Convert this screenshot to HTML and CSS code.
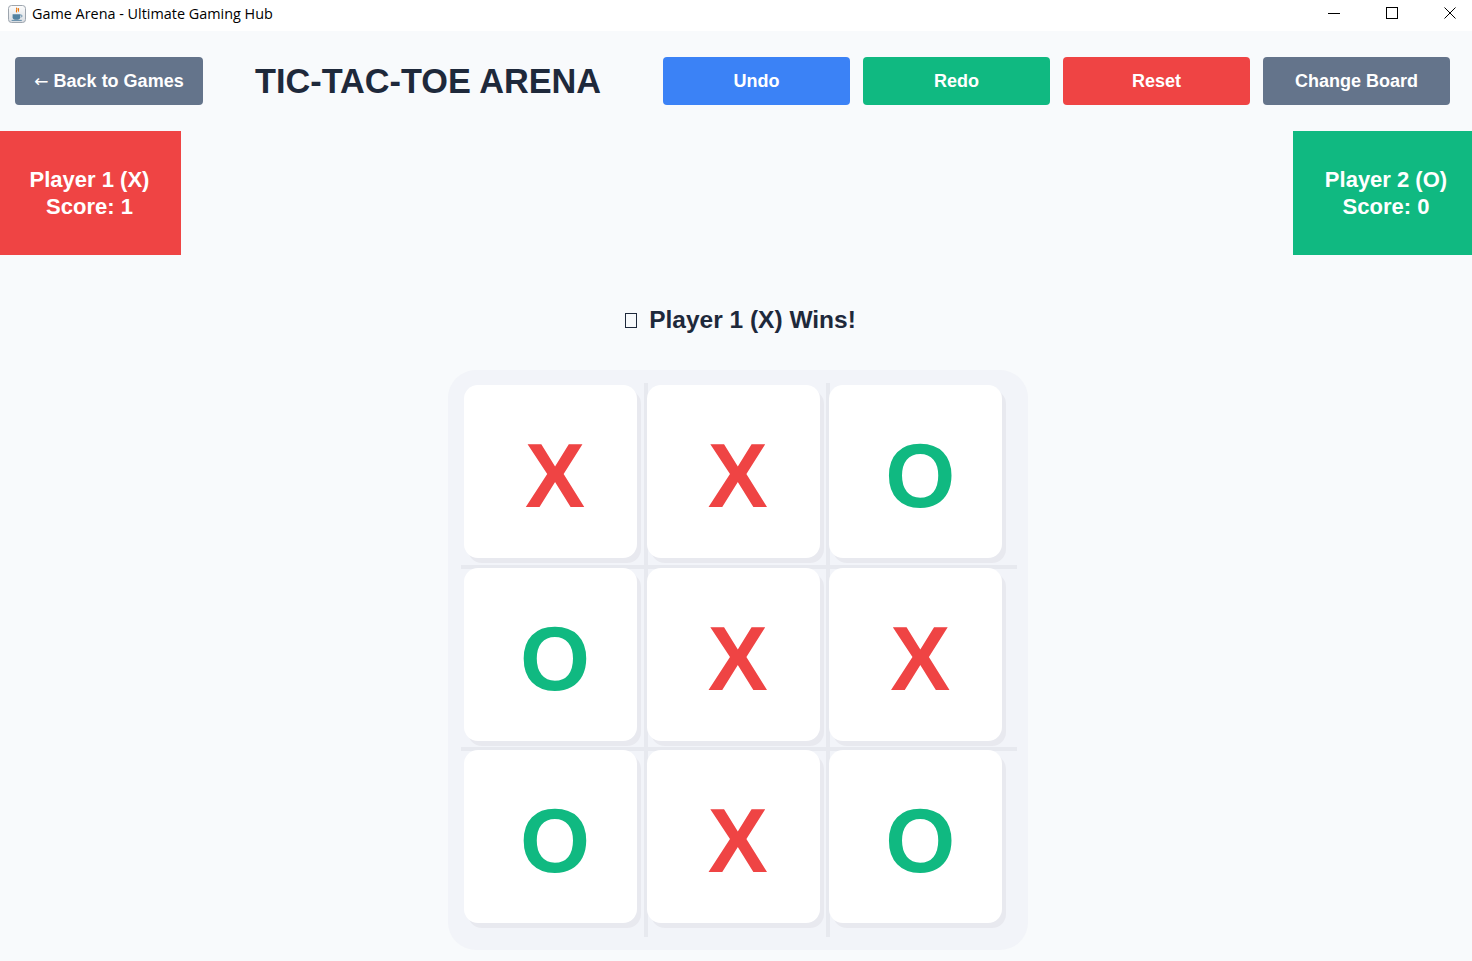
FILE: index.html
```html
<!DOCTYPE html>
<html lang="en">
<head>
<meta charset="utf-8">
<title>Game Arena - Ultimate Gaming Hub</title>
<link rel="stylesheet" href="styles.css">
</head>
<body>
<div class="window">
  <div class="titlebar">
    <div class="tb-left">
      <svg class="app-icon" viewBox="0 0 18 18">
        <defs>
          <linearGradient id="ig" x1="0" y1="0" x2="0" y2="1">
            <stop offset="0" stop-color="#fdfdfd"/>
            <stop offset="1" stop-color="#d9dde2"/>
          </linearGradient>
        </defs>
        <rect x="0.5" y="0.5" width="17" height="17" rx="3" fill="url(#ig)" stroke="#9da5ae"/>
        <path d="M8.5 3.2c1.6 1.2-1.2 2.2 0.2 3.8M10.4 3.6c1 0.9-0.8 1.6 0.1 2.6" fill="none" stroke="#e76f00" stroke-width="1.1" stroke-linecap="round"/>
        <path d="M4.6 9.2h7.6v3.2c0 1.6-1.5 2.4-3.8 2.4s-3.8-0.8-3.8-2.4z" fill="#5382a1"/>
        <path d="M12.2 10h0.9c1.2 0 1.2 2-0.3 2.2" fill="none" stroke="#5382a1" stroke-width="0.9"/>
        <path d="M3.6 15.4h10.2" stroke="#5382a1" stroke-width="0.9"/>
      </svg>
      <span class="tb-title">Game Arena - Ultimate Gaming Hub</span>
    </div>
    <div class="tb-controls">
      <span class="ctl"><svg viewBox="0 0 12 12"><path d="M0 6.5h12" stroke="#000" stroke-width="1"/></svg></span>
      <span class="ctl"><svg viewBox="0 0 12 12"><rect x="0.5" y="0.5" width="11" height="11" fill="none" stroke="#000" stroke-width="1"/></svg></span>
      <span class="ctl"><svg viewBox="0 0 12 12"><path d="M0.5 0.5l11 11M11.5 0.5l-11 11" stroke="#000" stroke-width="1"/></svg></span>
    </div>
  </div>

  <main class="app">
    <header class="topbar">
      <div class="topbar-left">
        <button class="btn btn-back"><span class="arrow">&larr;</span> Back to Games</button>
        <h1 class="title">TIC-TAC-TOE ARENA</h1>
      </div>
      <div class="actions">
        <button class="btn btn-blue">Undo</button>
        <button class="btn btn-green">Redo</button>
        <button class="btn btn-red">Reset</button>
        <button class="btn btn-gray">Change Board</button>
      </div>
    </header>

    <section class="players">
      <div class="player p1"><span>Player 1 (X)</span><span>Score: 1</span></div>
      <div class="player p2"><span>Player 2 (O)</span><span>Score: 0</span></div>
    </section>

    <div class="status"><span class="tofu"></span>Player 1 (X) Wins!</div>

    <div class="board-wrap">
      <div class="board">
        <div class="grid">
          <div class="cell x">X</div>
          <div class="cell x">X</div>
          <div class="cell o">O</div>
          <div class="cell o">O</div>
          <div class="cell x">X</div>
          <div class="cell x">X</div>
          <div class="cell o">O</div>
          <div class="cell x">X</div>
          <div class="cell o">O</div>
        </div>
      </div>
    </div>
  </main>
</div>
</body>
</html>
```

FILE: styles.css
```css
html, body {
  margin: 0;
  padding: 0;
}

body {
  width: 1472px;
  height: 961px;
  overflow: hidden;
  background: #f8fafc;
  font-family: "Liberation Sans", Arial, sans-serif;
}

/* ---------- window title bar ---------- */
.titlebar {
  height: 31px;
  background: #ffffff;
  display: flex;
  justify-content: space-between;
  align-items: flex-start;
}

.tb-left {
  display: flex;
  align-items: center;
  height: 27px;
  padding-left: 8px;
  gap: 6px;
}

.app-icon {
  width: 18px;
  height: 18px;
  display: block;
}

.tb-title {
  font-family: "Open Sans", "Noto Sans", sans-serif;
  font-size: 14.4px;
  color: #000000;
  line-height: 27px;
}

.tb-controls {
  display: flex;
  gap: 46px;
  padding-right: 16px;
}

.ctl svg {
  display: block;
  width: 12px;
  height: 12px;
  margin-top: 7px;
}

/* ---------- top bar ---------- */
.topbar {
  display: flex;
  justify-content: space-between;
  align-items: center;
  padding: 26px 22px 0 15px;
}

.topbar-left {
  display: flex;
  align-items: center;
  gap: 52px;
}

.btn {
  height: 48px;
  border: none;
  border-radius: 4px;
  color: #ffffff;
  font-family: "Liberation Sans", Arial, sans-serif;
  font-weight: bold;
  font-size: 18px;
  padding: 0;
  cursor: pointer;
}

.btn-back {
  width: 188px;
  background: #64748b;
}

.arrow {
  font-weight: normal;
  font-family: "DejaVu Sans", sans-serif;
  font-size: 17px;
}

.title {
  margin: 0;
  font-family: "Liberation Sans", Arial, sans-serif;
  font-weight: bold;
  font-size: 34.3px;
  color: #1e293b;
}

.actions {
  display: flex;
  gap: 13px;
}

.actions .btn {
  width: 187px;
}

.btn-blue { background: #3b82f6; }
.btn-green { background: #10b981; }
.btn-red { background: #ef4444; }
.btn-gray { background: #64748b; }

/* ---------- player cards ---------- */
.players {
  display: flex;
  justify-content: space-between;
  margin-top: 26px;
}

.player {
  height: 124px;
  box-sizing: border-box;
  display: flex;
  flex-direction: column;
  justify-content: center;
  align-items: center;
  color: #ffffff;
  font-weight: bold;
  font-size: 22px;
  line-height: 27px;
}

.p1 {
  width: 181px;
  padding-right: 2px;
  background: #ef4444;
}

.p2 {
  width: 179px;
  padding-left: 7px;
  background: #10b981;
}

/* ---------- status ---------- */
.status {
  margin-top: 51px;
  padding-left: 9px;
  text-align: center;
  font-weight: bold;
  font-size: 24.5px;
  line-height: 28px;
  color: #1e293b;
}

.tofu {
  display: inline-block;
  width: 10px;
  height: 13px;
  border: 1px solid #1e293b;
  margin-right: 12px;
}

/* ---------- board ---------- */
.board-wrap {
  display: flex;
  justify-content: center;
  margin-top: 36px;
  padding-left: 4px;
}

.board {
  width: 580px;
  height: 580px;
  box-sizing: border-box;
  padding: 15px 16px;
  border-radius: 28px;
  background:
    linear-gradient(#e7e9ef, #e7e9ef) 196px 13px / 4px 554px no-repeat,
    linear-gradient(#e7e9ef, #e7e9ef) 378px 13px / 4px 554px no-repeat,
    linear-gradient(#e7e9ef, #e7e9ef) 13px 195px / 556px 4px no-repeat,
    linear-gradient(#e7e9ef, #e7e9ef) 13px 377px / 556px 4px no-repeat,
    #f2f4f9;
}

.grid {
  display: grid;
  grid-template-columns: repeat(3, 182.67px);
  grid-template-rows: repeat(3, 182.67px);
}

.cell {
  width: 173px;
  height: 173px;
  box-sizing: border-box;
  padding: 9px 0 0 9px;
  background: #ffffff;
  border-radius: 14px;
  box-shadow: 4px 5px 0 #e8e9ef;
  display: flex;
  align-items: center;
  justify-content: center;
  font-weight: bold;
  font-size: 90px;
  line-height: 1;
}

.cell.x { color: #ef4444; }
.cell.o { color: #10b981; }
```
